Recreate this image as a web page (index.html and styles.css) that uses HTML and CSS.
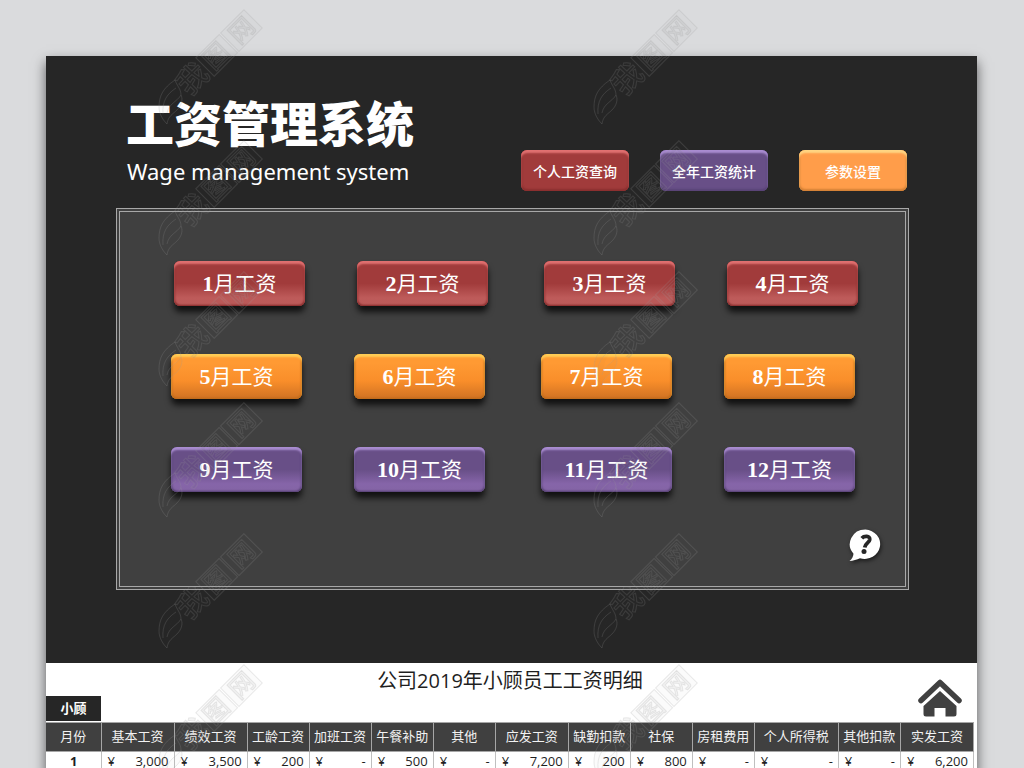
FILE: index.html
```html
<!DOCTYPE html>
<html lang="zh-CN">
<head>
<meta charset="utf-8">
<title>工资管理系统</title>
<link rel="stylesheet" href="styles.css">
</head>
<body>
<div class="page">
  <main class="sheet">
    <section class="dashboard">
      <header class="top">
        <div class="brand">
          <h1>工资管理系统</h1>
          <p>Wage management system</p>
        </div>
        <nav class="actions">
          <button class="btn small red">个人工资查询</button>
          <button class="btn small purple">全年工资统计</button>
          <button class="btn small amber">参数设置</button>
        </nav>
      </header>
      <div class="panel">
        <div class="months shifted">
          <div class="pair"><button class="btn red glossy"><b>1</b>月工资</button><button class="btn red glossy"><b>2</b>月工资</button></div>
          <div class="pair"><button class="btn red glossy"><b>3</b>月工资</button><button class="btn red glossy"><b>4</b>月工资</button></div>
        </div>
        <div class="months">
          <div class="pair"><button class="btn orange"><b>5</b>月工资</button><button class="btn orange"><b>6</b>月工资</button></div>
          <div class="pair"><button class="btn orange"><b>7</b>月工资</button><button class="btn orange"><b>8</b>月工资</button></div>
        </div>
        <div class="months">
          <div class="pair"><button class="btn purple glossy"><b>9</b>月工资</button><button class="btn purple glossy"><b>10</b>月工资</button></div>
          <div class="pair"><button class="btn purple glossy"><b>11</b>月工资</button><button class="btn purple glossy"><b>12</b>月工资</button></div>
        </div>
        <button class="help" aria-label="帮助">
          <svg width="36" height="36" viewBox="0 0 36 36">
            <path fill="#fff" d="M18.500 1.500A15.500 14.700 0 1 1 13 30.200C10 31.500 6 32.800 2.500 33C5 31 6.200 28.500 6.500 25.700A15.500 14.700 0 0 1 18.500 1.500Z"/>
            <path fill="none" stroke="#262626" stroke-width="3.800" d="M14.800 10.200C17 7.800 23.300 7.200 22.700 11.800C22.200 15 18.300 15 17.700 19.500"/>
            <circle cx="17" cy="23.500" r="2.500" fill="#262626"/>
          </svg>
        </button>
      </div>
    </section>
    <section class="detail">
      <div class="detail-head">
        <span class="employee">小顾</span>
        <h2>公司2019年小顾员工工资明细</h2>
        <a class="home" href="#" aria-label="首页">
          <svg width="46" height="40" viewBox="0 0 46 40">
            <path fill="none" stroke="#404040" stroke-width="5.500" stroke-linecap="round" stroke-linejoin="round" d="M4 22.500L23 4.500L42 22.500"/>
            <path fill="#404040" d="M23 13L39.500 28V36Q39.500 38.500 37 38.500H28.500V30H17.500V38.500H9Q6.500 38.500 6.500 36V28Z"/>
          </svg>
        </a>
      </div>
      <table class="wages">
        <colgroup><col class="c55"><col class="c73"><col class="c73"><col class="c62"><col class="c62"><col class="c62"><col class="c62"><col class="c73"><col class="c62"><col class="c62"><col class="c62"><col class="c84"><col class="c62"><col class="c73"></colgroup>
        <thead>
          <tr><th>月份</th><th>基本工资</th><th>绩效工资</th><th>工龄工资</th><th>加班工资</th><th>午餐补助</th><th>其他</th><th>应发工资</th><th>缺勤扣款</th><th>社保</th><th>房租费用</th><th>个人所得税</th><th>其他扣款</th><th>实发工资</th></tr>
        </thead>
        <tbody>
          <tr>
            <td class="month">1</td>
            <td><div class="money"><span>¥</span><span>3,000</span></div></td>
            <td><div class="money"><span>¥</span><span>3,500</span></div></td>
            <td><div class="money"><span>¥</span><span>200</span></div></td>
            <td><div class="money"><span>¥</span><span>-</span></div></td>
            <td><div class="money"><span>¥</span><span>500</span></div></td>
            <td><div class="money"><span>¥</span><span>-</span></div></td>
            <td><div class="money"><span>¥</span><span>7,200</span></div></td>
            <td><div class="money"><span>¥</span><span>200</span></div></td>
            <td><div class="money"><span>¥</span><span>800</span></div></td>
            <td><div class="money"><span>¥</span><span>-</span></div></td>
            <td><div class="money"><span>¥</span><span>-</span></div></td>
            <td><div class="money"><span>¥</span><span>-</span></div></td>
            <td><div class="money"><span>¥</span><span>6,200</span></div></td>
          </tr>
        </tbody>
      </table>
    </section>
  </main>
  <svg class="watermark" aria-hidden="true">
    <defs>
      <pattern id="mark" x="155" y="4" width="435" height="131" patternUnits="userSpaceOnUse">
        <path class="mark-line" d="M20 76C8 84 4 92 4 103C4 110 8 116 12 120C13 112 18 110 22 106C27 101 28 95 26 91C22 98 14 99 12 109M21 84C12 90 7 97 8 110M26 91C26 85 22 82 20 76"/>
        <g transform="translate(38 75) rotate(-45)">
          <text class="mark-text mark-lead" x="0" y="10">我</text>
          <rect class="mark-line" x="17" y="-13" width="33" height="26"/>
          <text class="mark-text" x="33" y="9">图</text>
          <rect class="mark-line" x="52" y="-13" width="33" height="26"/>
          <text class="mark-text" x="69" y="9">网</text>
        </g>
      </pattern>
    </defs>
    <rect width="100%" height="100%" fill="url(#mark)"/>
  </svg>
</div>
</body>
</html>
```
FILE: styles.css
```css
* { box-sizing: border-box; }
body {
  margin: 0;
  background: #dadbdd;
  font-family: "Open Sans", "Noto Sans CJK SC", sans-serif;
  color: #1f1f1f;
}
h1, h2, p { margin: 0; }
button { border: 0; padding: 0; font-family: inherit; cursor: pointer; }

.page {
  position: relative;
  height: 100vh;
  overflow: hidden;
  padding: 56px 47px 0 46px;
}
.sheet { background: #fff; box-shadow: 0 6px 12px rgba(0, 0, 0, 0.6); }

.dashboard { background: #262626; padding: 32px 68px 73px 70px; }
.top { display: flex; justify-content: space-between; padding: 0 2px 17px 10px; }
.brand h1 {
  font-family: "Noto Sans CJK SC", sans-serif;
  font-size: 48px;
  line-height: 66px;
  font-weight: 900;
  color: #fff;
}
.brand p { font-family: "Noto Sans", sans-serif; font-size: 22px; line-height: 34px; color: #fff; padding: 0 0 3px 1px; }
.actions { display: flex; gap: 31px; align-items: flex-end; }

.btn {
  width: 131px;
  height: 45px;
  border-radius: 6px;
  padding-bottom: 2px;
  color: #fff;
  font-size: 21px;
  line-height: 42px;
  font-family: "Noto Sans CJK SC", sans-serif;
  box-shadow: inset 0 3px 2px var(--light), inset 0 -1px 2px var(--dark), inset 1px 0 2px var(--dark), inset -1px 0 2px var(--dark), 0 6px 6px rgba(0, 0, 0, 0.75);
}
.btn b { font-family: "Liberation Serif", serif; font-size: 22px; }
.btn.small {
  width: 108px;
  height: 41px;
  padding: 0;
  font-size: 14px;
  line-height: 40px;
  font-weight: 500;
  box-shadow: inset 0 3px 2px var(--light), inset 0 -2px 2px var(--dark), inset 1px 0 2px var(--dark), inset -1px 0 2px var(--dark);
}
.red { --light: #e07070; --dark: #8c3030; background: #a13b3b; }
.purple { --light: #a98cd0; --dark: #5a4478; background: #684f87; }
.amber { --light: #ffd583; --dark: #d48237; background: #ff9d4a; }
.orange { --light: #ffcc55; --dark: #c06c1c; background: linear-gradient(#ff9a33 20%, #f98e2a 60%, #cf7123); }
.red.glossy { background: linear-gradient(#a13b3b 50%, #be5b5a 82%, #bb5a59); }
.purple.glossy { background: linear-gradient(#684f87 50%, #8665a9 82%, #8364a4); }

.panel {
  position: relative;
  border: 4px double #a8a8a8;
  background: #404040;
  height: 382px;
  padding: 49px 50px 0 51px;
  display: flex;
  flex-direction: column;
  gap: 48px;
}
.months { display: flex; justify-content: space-between; }
.months.shifted { padding-left: 3px; margin-right: -3px; }
.pair { display: flex; gap: 52px; }
.help {
  position: absolute;
  right: 22px;
  bottom: 22px;
  width: 36px;
  height: 36px;
  background: none;
  filter: drop-shadow(1px 2px 2px rgba(0, 0, 0, 0.6));
}
.help svg, .home svg { display: block; }

.detail { padding-right: 3px; }
.detail-head {
  display: grid;
  grid-template-columns: 1fr auto 1fr;
  height: 59px;
}
.detail-head h2 {
  font-size: 20px;
  line-height: 36px;
  font-weight: 400;
}
.employee {
  align-self: end;
  width: 55px;
  height: 25px;
  margin-bottom: 1px;
  background: #262626;
  color: #fff;
  font-size: 13px;
  line-height: 25px;
  font-weight: 700;
  text-align: center;
}
.home { justify-self: end; align-self: end; margin: 0 11px 4px 0; }

.wages { width: 100%; table-layout: fixed; border-collapse: collapse; }
.c55 { width: 55px; }
.c62 { width: 62px; }
.c73 { width: 73px; }
.c84 { width: 84px; }
.wages th {
  height: 29px;
  padding: 0 0 2px;
  background: #404040;
  color: #f2f2f2;
  font-size: 13px;
  line-height: 20px;
  font-weight: 400;
  white-space: nowrap;
  border: 1px solid #a6a6a6;
}
.wages td {
  padding: 1px 5px 3px 6px;
  font-size: 13px;
  line-height: 16px;
  border: 1px solid #bfbfbf;
}
.wages tr > :first-child { border-left: 0; }
.wages .month { text-align: center; font-weight: 700; }
.money { display: flex; justify-content: space-between; }

.watermark { position: absolute; top: 0; left: 0; width: 100%; height: 100%; pointer-events: none; }
.mark-line { fill: rgba(60, 60, 60, 0.02); stroke: rgba(150, 150, 150, 0.2); stroke-width: 1; }
.mark-text {
  font-family: "Noto Sans CJK SC", sans-serif;
  font-size: 25px;
  font-weight: 500;
  text-anchor: middle;
  fill: rgba(60, 60, 60, 0.05);
  stroke: rgba(150, 150, 150, 0.18);
  stroke-width: 1;
}
.mark-lead { font-size: 30px; }
```
